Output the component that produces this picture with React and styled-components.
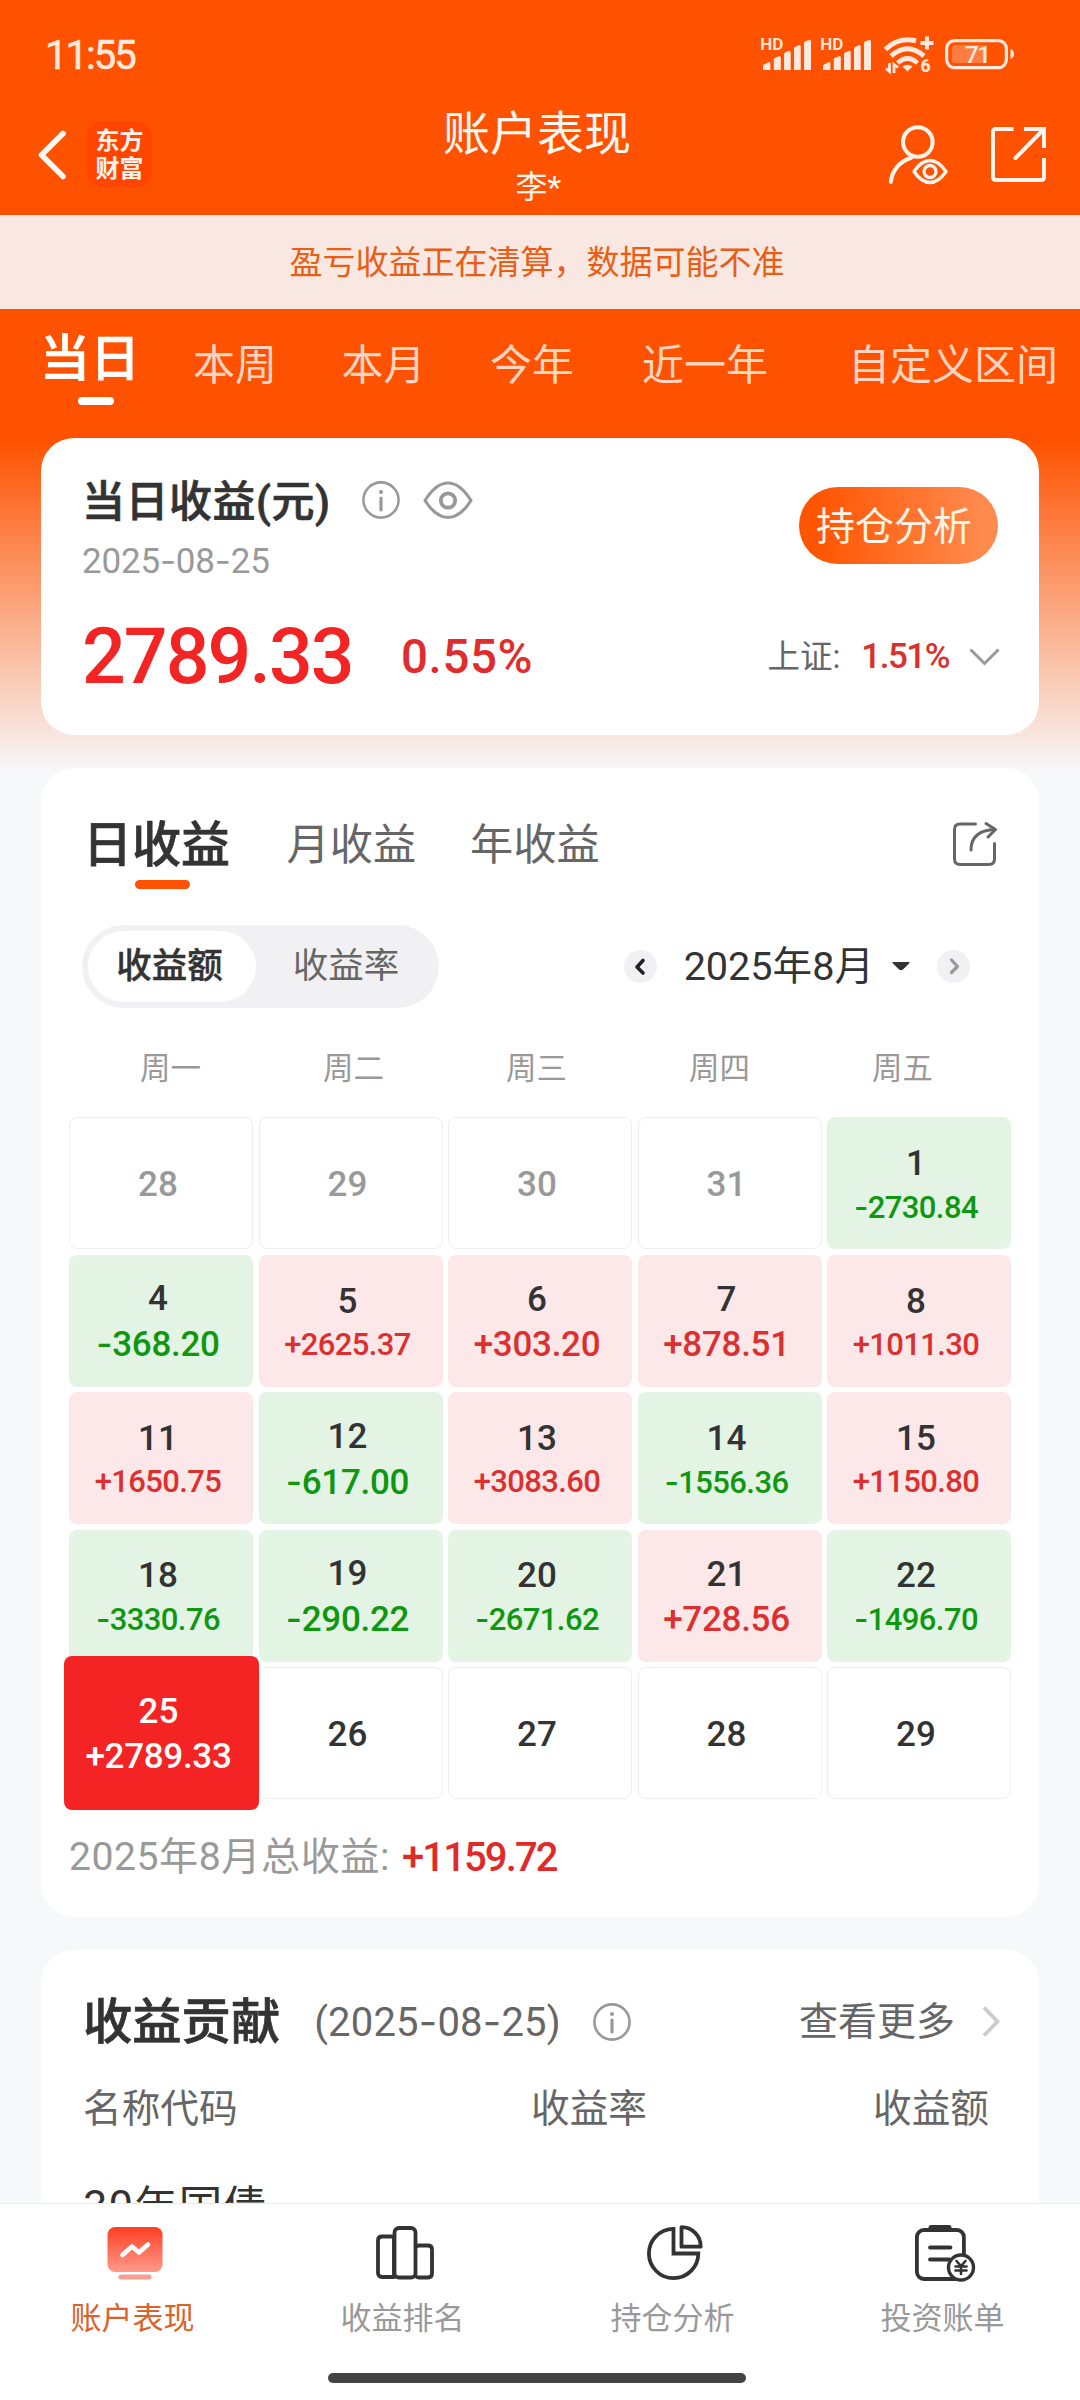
import React from "react";
import styled, { createGlobalStyle, css } from "styled-components";

const GlobalStyle = createGlobalStyle`
  * { box-sizing: border-box; }
  html, body { margin: 0; padding: 0; }
  body {
    font-family: Roboto, "Noto Sans CJK SC", sans-serif;
    line-height: 1.2;
    color: #333;
    -webkit-font-smoothing: antialiased;
  }
  svg { display: block; flex: none; overflow: visible; }
`;

const ORANGE = "#ff5200";

const heavy = css`
  font-weight: 500;
  -webkit-text-stroke: 0.7px currentColor;
`;

const Screen = styled.div`
  width: 1080px;
  height: 2400px;
  overflow: hidden;
  display: flex;
  flex-direction: column;
  background: linear-gradient(to bottom, ${ORANGE} 0, ${ORANGE} 440px, #f7f8fa 772px);
`;

/* ---------- status bar ---------- */
const StatusBar = styled.header`
  height: 106px;
  flex: none;
  display: flex;
  align-items: flex-start;
  justify-content: space-between;
  padding: 34px 65px 0 45px;
  color: #ffe9de;
`;

const Clock = styled.span`
  font-size: 40px;
  line-height: 43px;
  letter-spacing: -2px;
  -webkit-text-stroke: 0.6px currentColor;
`;

const StatusIcons = styled.div`
  display: flex;
  height: 42px;
`;

const StatusSvg = styled.svg`
  text {
    font-family: Roboto, sans-serif;
  }
`;

/* ---------- title bar ---------- */
const TitleBar = styled.nav`
  height: 109px;
  flex: none;
  display: grid;
  grid-template-columns: 300px 1fr 300px;
`;

const BarStart = styled.div`
  display: flex;
  align-items: flex-start;
  padding: 15px 0 0 38px;
`;

const BackIcon = styled.svg`
  margin-top: 10px;
`;

const Logo = styled.div`
  margin-left: 21px;
  width: 65px;
  height: 66px;
  border-radius: 15px;
  background: #ff4500;
  display: flex;
  align-items: center;
  justify-content: center;
  padding-top: 1px;
  color: #fff3ec;
  font-size: 24px;
  line-height: 28px;
  font-weight: 700;
  text-align: center;
`;

const BarCenter = styled.div`
  display: flex;
  flex-direction: column;
  align-items: center;
  padding-right: 6px;
  color: #fff7f2;
`;

const PageTitle = styled.h1`
  margin: 0;
  font-weight: 400;
  font-size: 47px;
  line-height: 56px;
`;

const Account = styled.span`
  font-size: 32px;
  line-height: 40px;
  margin-top: 5px;
  padding-left: 3px;
`;

const BarEnd = styled.div`
  display: flex;
  justify-content: flex-end;
  gap: 43px;
  padding: 19px 34px 0 0;
`;

/* ---------- notice ---------- */
const Notice = styled.div`
  height: 94px;
  flex: none;
  background: #f9e8e1;
  color: #e95d15;
  display: flex;
  align-items: center;
  justify-content: center;
  padding: 2px 6px 0 0;
  font-size: 33px;
  line-height: 40px;
`;

/* ---------- period tabs ---------- */
const PeriodTabs = styled.div`
  height: 129px;
  flex: none;
  display: flex;
  padding-left: 40px;
`;

const Period = styled.div`
  display: flex;
  flex-direction: column;
  align-items: center;
  white-space: nowrap;
  margin-left: ${(p) => p.$gap || 0}px;
  padding-top: ${(p) => (p.$active ? 23 : 30)}px;
  color: ${(p) => (p.$active ? "#fff" : "#ffd5c1")};
  font-size: ${(p) => (p.$active ? 50 : 42)}px;
  line-height: 54px;
  ${(p) => p.$active && heavy}
`;

const PeriodMark = styled.i`
  width: 36px;
  height: 8px;
  border-radius: 4px;
  background: #fff;
  margin: 11px 0 0 12px;
`;

/* ---------- cards ---------- */
const Body = styled.main`
  flex: 1;
  min-height: 0;
  overflow: hidden;
  display: flex;
  flex-direction: column;
  gap: 33px;
  padding: 0 41px;
`;

const Card = styled.section`
  flex: none;
  height: ${(p) => p.$h}px;
  border-radius: 33px;
  background: #fff;
  display: flex;
  flex-direction: column;
`;

const SummaryCard = styled(Card)`
  padding: 37px 39px 0 41px;
`;

const Row = styled.div`
  display: flex;
  align-items: ${(p) => p.$align || "center"};
  justify-content: ${(p) => p.$justify || "flex-start"};
`;

const SummaryTitle = styled.h2`
  margin: 0;
  font-size: 43px;
  line-height: 50px;
  letter-spacing: 0.5px;
  padding-top: 2px;
  margin-bottom: -2px;
  ${heavy}
`;

const InfoIcon = styled.svg`
  margin-left: ${(p) => p.$left}px;
`;

const EyeIcon = styled.svg`
  margin-left: 23px;
`;

const Dash = styled.span`
  font-family: Inter, sans-serif;
`;

const DateText = styled.div`
  margin-top: 17px;
  font-size: 35px;
  line-height: 36px;
  letter-spacing: -0.2px;
  color: #999;
`;

const PillButton = styled.button`
  margin: 12px 2px 0 0;
  width: 199px;
  height: 77px;
  border: 0;
  border-radius: 39px;
  padding: 2px 9px 0 0;
  background: linear-gradient(90deg, #ff5500 8%, #ff8a4e 92%);
  color: #fff4e8;
  font-family: inherit;
  font-size: 39px;
  line-height: 44px;
`;

const Figures = styled.div`
  display: flex;
  align-items: center;
  height: 70px;
  margin-top: 42px;
`;

const Profit = styled.strong`
  width: 319px;
  font-size: 77px;
  line-height: 72px;
  font-weight: 500;
  letter-spacing: -1.9px;
  color: #f22424;
`;

const Rate = styled.strong`
  flex: 1;
  font-size: 47.5px;
  font-weight: 500;
  letter-spacing: 0.6px;
  color: #df2d2d;
`;

const IndexLabel = styled.span`
  font-size: 32.5px;
`;

const IndexGroup = styled.div`
  display: flex;
  align-items: center;
  color: #666;
`;

const IndexRate = styled.strong`
  margin: 0 20px 0 21px;
  font-size: 35px;
  font-weight: 500;
  letter-spacing: -1.5px;
  color: #d93030;
`;

/* ---------- calendar card ---------- */
const CalendarCard = styled(Card)`
  padding: 48px 28px 0;
`;

const ViewTabs = styled.div`
  display: flex;
  align-items: flex-start;
  height: 109px;
  padding: 0 14px 0 14px;
`;

const ViewTab = styled.div`
  display: flex;
  flex-direction: column;
  align-items: center;
  margin-right: ${(p) => (p.$active ? 56.5 : 54)}px;
  padding-top: 2px;
  font-size: ${(p) => (p.$active ? 49 : 43.2)}px;
  color: ${(p) => (p.$active ? "#333" : "#666")};
  line-height: 56px;
  ${(p) => p.$active && heavy}
`;

const ViewMark = styled.i`
  width: 55px;
  height: 9px;
  border-radius: 5px;
  background: ${ORANGE};
  margin: 6px 0 0 12px;
`;

const ShareIcon = styled.svg`
  margin: 6px 0 0 auto;
`;

const Controls = styled.div`
  display: flex;
  align-items: center;
  height: 83px;
  padding: 0 41px 0 13px;
`;

const Segmented = styled.div`
  display: flex;
  width: 357px;
  height: 83px;
  padding: 6px;
  border-radius: 42px;
  background: #f1f1f4;
`;

const Segment = styled.div`
  width: ${(p) => (p.$active ? 168 : 177)}px;
  height: 71px;
  border-radius: 36px;
  display: flex;
  align-items: center;
  justify-content: center;
  padding-right: ${(p) => (p.$active ? 5 : 0)}px;
  padding-left: ${(p) => (p.$active ? 0 : 3)}px;
  background: ${(p) => (p.$active ? "#fff" : "transparent")};
  color: ${(p) => (p.$active ? "#333" : "#666")};
  font-size: 35.5px;
  ${(p) => p.$active && "font-weight: 500; -webkit-text-stroke: 0.4px currentColor;"}
`;

const MonthPicker = styled.div`
  display: flex;
  align-items: center;
  margin-left: auto;
`;

const MonthLabel = styled.span`
  margin: 0 18px 0 27px;
  padding-top: 1px;
  font-size: 39.6px;
  line-height: 48px;
`;

const NextWrap = styled.div`
  margin-left: 27px;
`;

const Weekdays = styled.div`
  display: grid;
  grid-template-columns: repeat(5, 183px);
  margin: 41px 0 0 10px;
  height: 68px;
  line-height: 40px;
  font-size: 30.5px;
  color: #999;
  text-align: center;
`;

const Calendar = styled.div`
  display: grid;
  grid-template-columns: repeat(5, 184px);
  grid-auto-rows: 132px;
  gap: 5.5px;
`;

const tones = {
  up: css`
    background: #fce8e8;
    --value: #dc3030;
  `,
  down: css`
    background: #e3f4e5;
    --value: #0f970f;
  `,
  none: css`
    border: 1px solid #eee;
  `,
  muted: css`
    border: 1px solid #eee;
    color: #999;
  `,
  selected: css`
    background: #f52424;
    color: #fff;
    --value: #fff;
    margin: -11px -6px -11px -5px;
    z-index: 1;
  `,
};

const Cell = styled.div`
  border-radius: 8px;
  display: flex;
  flex-direction: column;
  align-items: center;
  justify-content: center;
  padding: 2px 6px 0 0;
  font-weight: 500;
  ${(p) => tones[p.$tone]}
`;

const Day = styled.span`
  font-size: 35px;
  line-height: 45px;
`;

const Value = styled.span`
  color: var(--value);
  font-size: ${(p) => (p.$small ? 31 : 35)}px;
  line-height: ${(p) => (p.$small ? 41 : 45)}px;
  letter-spacing: ${(p) => (p.$small ? -0.6 : -0.3)}px;
`;

const MonthTotal = styled.div`
  display: flex;
  align-items: center;
  margin-top: 32px;
  height: 54px;
  font-size: 39.2px;
  letter-spacing: 0.5px;
  color: #999;
`;

const TotalValue = styled.strong`
  margin-left: 12px;
  font-size: 40px;
  font-weight: 500;
  letter-spacing: -1.9px;
  color: #e02a2a;
`;

/* ---------- contribution card ---------- */
const ContributionCard = styled(Card)`
  padding: 46px 39px 0 42px;
`;

const ContributionTitle = styled.h2`
  margin: 0;
  font-size: 49.3px;
  line-height: 52px;
  ${heavy}
`;

const ContributionDate = styled.span`
  margin-left: 34px;
  font-size: 40px;
  letter-spacing: 0.2px;
  color: #666;
`;

const More = styled.div`
  margin-left: auto;
  display: flex;
  align-items: center;
  gap: 27px;
  font-size: 39px;
  color: #666;
`;

const Columns = styled.div`
  display: grid;
  grid-template-columns: 448px 342px 1fr;
  margin-top: 35px;
  line-height: 52px;
  font-size: 38.7px;
  color: #666;
`;

const Holding = styled.div`
  margin-top: 43px;
  font-size: 43.5px;
  line-height: 60px;
  letter-spacing: 1.1px;
`;

/* ---------- bottom bar ---------- */
const BottomBar = styled.footer`
  flex: none;
  height: 197px;
  background: #fff;
  border-top: 1px solid #e9e9eb;
  display: flex;
  flex-direction: column;
  align-items: center;
`;

const BottomTabs = styled.div`
  display: grid;
  grid-template-columns: repeat(4, 270px);
  height: 169px;
`;

const BottomTab = styled.div`
  display: flex;
  flex-direction: column;
  align-items: center;
  padding-top: 20px;
  color: ${(p) => (p.$active ? "#d8642a" : "#999")};
  font-size: 31px;
  line-height: 40px;
`;

const BottomLabel = styled.span`
  margin-top: 15px;
  padding-right: 5px;
`;

const HomeIndicator = styled.div`
  width: 418px;
  height: 10px;
  border-radius: 5px;
  background: #444;
  margin-right: 6px;
`;

/* ---------- drawings ---------- */
const Signal = () => (
  <StatusSvg width="60.3" height="42" viewBox="0 0 60.3 42" fill="#ffe9de">
    <text x="-0.8" y="16.500" fontSize="17" fontWeight="600">HD</text>
    <path d="M2 36V32q0-1 1-1.500l5-2.500q1.400 0 1.400 1.500V36Z" />
    <path d="M12.800 36V25.500q0-1 1-1.500l4.600-2q1.400 0 1.400 1.500V36Z" />
    <path d="M23 36V20q0-1 1-1.500l4.300-1.800q1.400 0 1.400 1.500V36Z" />
    <path d="M33 36V14.500q0-1 1-1.500l4.300-2q1.400 0 1.400 1.500V36Z" />
    <path d="M43 36V9q0-1 1-1.500l4.300-1.800q1.700 0 1.700 1.500V36Z" />
  </StatusSvg>
);

const Wifi = () => (
  <StatusSvg width="63.400" height="42" viewBox="0 0 63.400 42" fill="none" stroke="#ffe9de">
    <path d="M3.500 15.500Q16 2.500 34 6.800" strokeWidth="5" />
    <path d="M9 22Q25.500 7.500 42 22" strokeWidth="5" />
    <path d="M15.500 29Q25.500 20 35.500 29" strokeWidth="4.600" />
    <path d="M20.500 32.500Q25.500 29 30.500 32.500L25.500 37.500Z" fill="#ffe9de" stroke="none" />
    <path d="M45 2.500V15.500M38.500 9H51.500" strokeWidth="4" />
    <path d="M4 34.500L7.500 37.500V29M12 39V30.500L16 33.500" strokeWidth="2.800" />
    <text x="38.500" y="38.500" fontSize="17.500" fontWeight="800" fill="#ffe9de" stroke="none">6</text>
  </StatusSvg>
);

const Battery = () => (
  <StatusSvg width="70" height="42" viewBox="0 0 70 42" fill="none">
    <rect x="1.600" y="6.600" width="59.800" height="27" rx="8" stroke="#ffe9de" strokeWidth="3.200" />
    <rect x="7" y="11" width="35" height="18" rx="3" fill="#ff7c40" />
    <path d="M65.500 15v10q3.500-1 3.500-5t-3.500-5Z" fill="#ffe9de" />
    <text x="20" y="29" fontSize="24" fontWeight="500" fill="#ffe9de" letterSpacing="-1.500">71</text>
  </StatusSvg>
);

const Info = ({ left }) => (
  <InfoIcon $left={left} width="38" height="38" viewBox="0 0 38 38" fill="none" stroke="#999">
    <circle cx="19" cy="19" r="17.600" strokeWidth="2.600" />
    <circle cx="19" cy="11" r="2" fill="#999" stroke="none" />
    <path d="M19 17V29" strokeWidth="3.200" strokeLinecap="round" />
  </InfoIcon>
);

const Prev = () => (
  <svg width="33" height="33" viewBox="0 0 33 33" fill="none">
    <circle cx="16.500" cy="16.500" r="16.500" fill="#f1f1f4" />
    <path d="M19 10.500L13 17L19 23" stroke="#222" strokeWidth="3.600" strokeLinecap="round" strokeLinejoin="round" />
  </svg>
);

const Next = () => (
  <svg width="33" height="33" viewBox="0 0 33 33" fill="none">
    <circle cx="16.500" cy="16.500" r="16.500" fill="#f1f1f4" />
    <path d="M14.500 10L20.500 16.500L14.500 22.500" stroke="#999" strokeWidth="3.200" strokeLinecap="round" strokeLinejoin="round" />
  </svg>
);

const ChartIcon = () => (
  <svg width="56" height="60" viewBox="0 0 56 60" fill="none">
    <defs>
      <linearGradient id="screenFill" x1="0" y1="0" x2="0" y2="1">
        <stop offset="0" stopColor="#ff3f22" />
        <stop offset="1" stopColor="#ff998c" />
      </linearGradient>
    </defs>
    <rect x="0.500" y="3" width="55" height="45" rx="7.500" fill="url(#screenFill)" />
    <path d="M15.500 31L25 22.500L32 28.500L41 20.500" stroke="#fff" strokeWidth="4.600" strokeLinecap="round" strokeLinejoin="round" />
    <rect x="11.500" y="50.500" width="33" height="5" rx="2.500" fill="#f79d92" />
  </svg>
);

const RankIcon = () => (
  <svg width="58" height="60" viewBox="0 0 58 60" fill="none" stroke="#333" strokeWidth="3.800" strokeLinejoin="round">
    <path d="M18 13.500V53H6Q2 53 2 49V16.500Q2 12.500 6 12.500H15Q18 12.500 18.500 14" />
    <rect x="18.500" y="4" width="21" height="49.500" rx="4.500" />
    <path d="M39.500 24Q40 21.500 43 21.500H52Q56 21.500 56 25.500V49.500Q56 53.500 52 53.500H43Q40 53.500 39.500 51" />
  </svg>
);

const PieIcon = () => (
  <svg width="56" height="60" viewBox="0 0 56 60" fill="none" stroke="#333" strokeWidth="3.800">
    <path d="M26.500 4.800A24.700 24.700 0 1 0 51.300 29.500H26.500Z" />
    <path d="M34.500 3.200A19.200 19.200 0 0 1 53.700 22.700H34.500Z" strokeLinejoin="round" />
  </svg>
);

const BillIcon = () => (
  <svg width="60" height="60" viewBox="0 0 60 60" fill="none" stroke="#333" strokeWidth="3.800" strokeLinecap="round">
    <rect x="1.900" y="6" width="47" height="49" rx="7" />
    <path d="M16 3.500H34" strokeWidth="5" />
    <path d="M15 23.500H35.500M15 35.500H34" />
    <circle cx="46" cy="43.500" r="12.500" fill="#fff" strokeWidth="3.400" />
    <path d="M41.500 37L46 42L50.500 37M46 42V50M40.500 42.500H51.500M40.500 46.500H51.500" strokeWidth="2.600" />
  </svg>
);

/* Digits with wide dashes between them */
const Dashed = ({ children }) =>
  children.split(/(-)/).map((part, i) => (part === "-" ? <Dash key={i}>-</Dash> : part));

/* ---------- data ---------- */
const days = [
  ["28", null, "muted"], ["29", null, "muted"], ["30", null, "muted"], ["31", null, "muted"], ["1", "-2730.84", "down"],
  ["4", "-368.20", "down"], ["5", "+2625.37", "up"], ["6", "+303.20", "up"], ["7", "+878.51", "up"], ["8", "+1011.30", "up"],
  ["11", "+1650.75", "up"], ["12", "-617.00", "down"], ["13", "+3083.60", "up"], ["14", "-1556.36", "down"], ["15", "+1150.80", "up"],
  ["18", "-3330.76", "down"], ["19", "-290.22", "down"], ["20", "-2671.62", "down"], ["21", "+728.56", "up"], ["22", "-1496.70", "down"],
  ["25", "+2789.33", "selected"], ["26", null, "none"], ["27", null, "none"], ["28", null, "none"], ["29", null, "none"],
];

const periods = [
  ["本周", 53], ["本月", 64.5], ["今年", 64.5], ["近一年", 68], ["自定义区间", 80],
];

const bottomTabs = [
  ["账户表现", ChartIcon], ["收益排名", RankIcon], ["持仓分析", PieIcon], ["投资账单", BillIcon],
];

export default function App() {
  return (
    <>
      <GlobalStyle />
      <Screen>
        <StatusBar>
          <Clock>11:55</Clock>
          <StatusIcons>
            <Signal />
            <Signal />
            <Wifi />
            <Battery />
          </StatusIcons>
        </StatusBar>

        <TitleBar>
          <BarStart>
            <BackIcon width="28" height="48" viewBox="0 0 28 48" fill="none">
              <path d="M25 2.500L3.500 24L25 45.500" stroke="#fff7f2" strokeWidth="5.600" strokeLinecap="round" strokeLinejoin="round" />
            </BackIcon>
            <Logo>东方<br />财富</Logo>
          </BarStart>
          <BarCenter>
            <PageTitle>账户表现</PageTitle>
            <Account>李*</Account>
          </BarCenter>
          <BarEnd>
            <svg width="59" height="60" viewBox="0 0 59 60" fill="none" stroke="#fff3ec" strokeWidth="4" strokeLinecap="round">
              <circle cx="28.800" cy="17" r="14.800" />
              <path d="M22.500 32.500Q4 39 1.800 57" />
              <path d="M25 46.500Q32.500 35.500 41 35.500T57 46.500Q49.500 57.500 41 57.500T25 46.500Z" strokeWidth="3.400" strokeLinejoin="round" />
              <circle cx="41" cy="46.500" r="6" strokeWidth="3.400" />
            </svg>
            <svg width="55" height="57" viewBox="0 0 55 57" fill="none" stroke="#fff3ec" strokeWidth="4">
              <path d="M22.500 4H5Q2 4 2 7V52Q2 55 5 55H50Q53 55 53 52V33" />
              <path d="M33 4H53V23" />
              <path d="M24.500 33L52 5" strokeLinecap="round" />
            </svg>
          </BarEnd>
        </TitleBar>

        <Notice>盈亏收益正在清算，数据可能不准</Notice>

        <PeriodTabs>
          <Period $active>
            当日
            <PeriodMark />
          </Period>
          {periods.map(([label, gap]) => (
            <Period key={label} $gap={gap}>{label}</Period>
          ))}
        </PeriodTabs>

        <Body>
          <SummaryCard $h={297}>
            <Row $align="flex-start" $justify="space-between">
              <div>
                <Row>
                  <SummaryTitle>当日收益(元)</SummaryTitle>
                  <Info left={32} />
                  <EyeIcon width="50" height="38" viewBox="0 0 50 38" fill="none" stroke="#999" strokeWidth="3.200">
                    <path d="M2 19.500Q13 2 25 2T48 19.500Q37 36.500 25 36.500T2 19.500Z" strokeLinejoin="round" />
                    <circle cx="25" cy="19.500" r="7.200" strokeWidth="3.800" />
                  </EyeIcon>
                </Row>
                <DateText><Dashed>2025-08-25</Dashed></DateText>
              </div>
              <PillButton>持仓分析</PillButton>
            </Row>
            <Figures>
              <Profit>2789.33</Profit>
              <Rate>0.55%</Rate>
              <IndexGroup>
                <IndexLabel>上证:</IndexLabel>
                <IndexRate>1.51%</IndexRate>
                <svg width="31" height="18" viewBox="0 0 31 18" fill="none">
                  <path d="M1.500 1.500L15.500 15.500L29.500 1.500" stroke="#999" strokeWidth="3" />
                </svg>
              </IndexGroup>
            </Figures>
          </SummaryCard>

          <CalendarCard $h={1149}>
            <ViewTabs>
              <ViewTab $active>
                日收益
                <ViewMark />
              </ViewTab>
              <ViewTab>月收益</ViewTab>
              <ViewTab>年收益</ViewTab>
              <ShareIcon width="44" height="44" viewBox="0 0 44 44" fill="none" stroke="#666" strokeWidth="3" strokeLinecap="round" strokeLinejoin="round">
                <path d="M22.500 2H7Q1.500 2 1.500 7.500V37Q1.500 42.500 7 42.500H36Q41.500 42.500 41.500 37V21.500" />
                <path d="M18 28Q18 8.500 42 7.500" />
                <path d="M33 1.500L42.500 7.500L35 15" />
              </ShareIcon>
            </ViewTabs>

            <Controls>
              <Segmented>
                <Segment $active>收益额</Segment>
                <Segment>收益率</Segment>
              </Segmented>
              <MonthPicker>
                <Prev />
                <MonthLabel>2025年8月</MonthLabel>
                <svg width="18" height="9" viewBox="0 0 18 9">
                  <path d="M1 0H17Q18 0 17.500 1L11 7.500Q9 9 7 7.500L0.500 1Q0 0 1 0Z" fill="#333" />
                </svg>
                <NextWrap>
                  <Next />
                </NextWrap>
              </MonthPicker>
            </Controls>

            <Weekdays>
              {["周一", "周二", "周三", "周四", "周五"].map((d) => (
                <span key={d}>{d}</span>
              ))}
            </Weekdays>

            <Calendar>
              {days.map(([day, value, tone], i) => (
                <Cell key={i} $tone={tone}>
                  <Day>{day}</Day>
                  {value && (
                    <Value $small={value.length > 7 && tone !== "selected"}>
                      <Dashed>{value}</Dashed>
                    </Value>
                  )}
                </Cell>
              ))}
            </Calendar>

            <MonthTotal>
              2025年8月总收益:
              <TotalValue>+1159.72</TotalValue>
            </MonthTotal>
          </CalendarCard>

          <ContributionCard $h={500}>
            <Row>
              <ContributionTitle>收益贡献</ContributionTitle>
              <ContributionDate><Dashed>(2025-08-25)</Dashed></ContributionDate>
              <Info left={32} />
              <More>
                查看更多
                <svg width="18" height="31" viewBox="0 0 18 31" fill="none">
                  <path d="M2 1.500L15.500 15.500L2 29.500" stroke="#ccc" strokeWidth="3.800" />
                </svg>
              </More>
            </Row>
            <Columns>
              <span>名称代码</span>
              <span>收益率</span>
              <span>收益额</span>
            </Columns>
            <Holding>30年国债</Holding>
          </ContributionCard>
        </Body>

        <BottomBar>
          <BottomTabs>
            {bottomTabs.map(([label, Icon], i) => (
              <BottomTab key={label} $active={i === 0}>
                <Icon />
                <BottomLabel>{label}</BottomLabel>
              </BottomTab>
            ))}
          </BottomTabs>
          <HomeIndicator />
        </BottomBar>
      </Screen>
    </>
  );
}
